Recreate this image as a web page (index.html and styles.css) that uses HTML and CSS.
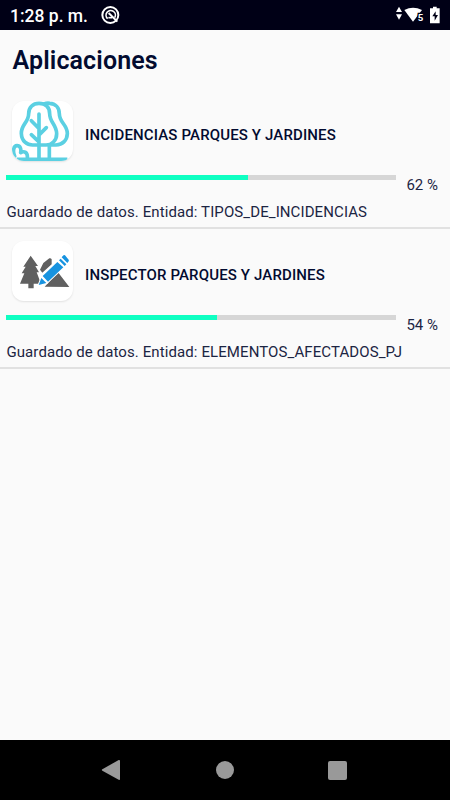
FILE: index.html
```
<!DOCTYPE html>
<html lang="es">

<head>
    <meta charset="UTF-8">
    <title>Aplicaciones</title>
    <link rel="stylesheet" href="styles.css">
</head>

<body>
    <div class="screen">
        <div class="status">
            <span class="clock">1:28 p. m.</span>
            <svg class="notif" width="20" height="20" viewBox="0 0 60 60">
                <circle cx="31" cy="30" r="24" fill="none" stroke="#fff" stroke-width="6" />
                <path d="M23 41A14 14 0 1 1 44 38" fill="none" stroke="#fff" stroke-width="5" />
                <path d="M26 24L52 50" stroke="#fff" stroke-width="6" />
                <path d="M25 38h12" stroke="#fff" stroke-width="5" />
            </svg>
            <svg class="signals" width="50" height="20" viewBox="0 0 150 60">
                <path d="M15 5l9 16H6zM6 28h18l-9 16z" fill="#fff" />
                <path d="M31 15Q57 1 84 15L57 50z" fill="#fff" />
                <text x="71" y="48" class="wifi-num">5</text>
                <path d="M117 5h11v5h9v45h-29V10h9z" fill="#fff" />
                <path d="M125 19l-10 15h7v13l10-17h-7z" fill="#000016" />
            </svg>
        </div>
        <h1 class="title">Aplicaciones</h1>
        <ul class="apps">
            <li class="app">
                <div class="head">
                    <div class="icon">
                        <svg width="60" height="60" viewBox="0 0 180 180" fill="none" stroke="#5bd0e2" stroke-width="11" stroke-linecap="round" stroke-linejoin="round">
                            <path d="M81 7C62 7 50 20 50 38C50 64 27 71 28 97C29 121 45 132 62 132H102C119 132 134 119 134 98C134 71 113 64 113 38C113 19 101 7 81 7z" />
                            <path d="M96 9C101 7 108 6 113 7C131 8 142 20 142 38C142 65 167 72 166 98C165 119 151 131 132 132H111" />
                            <path d="M81 39v132M58 59l22 23M58 101l22 21M103 80L82 101M112 134v38" />
                            <path d="M8 166C2 152 4 134 15 134C25 134 28 144 26 155C36 149 48 153 46 172" />
                            <path d="M14 175H166" stroke-linecap="butt" />
                        </svg>
                    </div>
                    <span class="name">INCIDENCIAS PARQUES Y JARDINES</span>
                </div>
                <div class="progress">
                    <div class="track">
                        <div class="bar" style="width: 62%"></div>
                    </div>
                    <span class="percent">62 %</span>
                </div>
                <p class="message">Guardado de datos. Entidad: TIPOS_DE_INCIDENCIAS</p>
            </li>
            <li class="app">
                <div class="head">
                    <div class="icon">
                        <svg width="60" height="60" viewBox="0 0 180 180">
                            <path d="M56 44L78 75H70L81 94H74L87 128H65V142H49V128H24L37 97H29L41 77H34z" fill="#606060" />
                            <path d="M84 86L94 66L112 52Q117 51 119 55V70L91 95zM98 137L138 94L172 138z" fill="#606060" />
                            <path d="M92 105L136 63L154 79L108 122zM141 58L146 53L163 70L158 75zM149 49L153 44Q156 40 159 43L170 56Q172 59 169 62L166 66zM88 111L103 126L80 132z" fill="#1793e0" stroke="#fff" stroke-width="6" paint-order="stroke" />
                        </svg>
                    </div>
                    <span class="name">INSPECTOR PARQUES Y JARDINES</span>
                </div>
                <div class="progress">
                    <div class="track">
                        <div class="bar" style="width: 54%"></div>
                    </div>
                    <span class="percent">54 %</span>
                </div>
                <p class="message">Guardado de datos. Entidad: ELEMENTOS_AFECTADOS_PJ</p>
            </li>
        </ul>
        <div class="navbar">
            <svg width="20" height="22" viewBox="0 0 60 66">
                <path d="M4 31L53 3Q57 2 57 6V60Q57 64 53 62L4 35Q1 33 4 31z" fill="#999" />
            </svg>
            <span class="home"></span>
            <span class="recent"></span>
        </div>
    </div>
</body>

</html>
```

FILE: styles.css
```
* {
    box-sizing: border-box;
}

body {
    margin: 0;
    font-family: Roboto, sans-serif;
    color: #020b30;
}

.screen {
    display: flex;
    flex-direction: column;
    width: 450px;
    height: 800px;
    background-color: #fafafa;
}

.status {
    display: flex;
    align-items: center;
    height: 30px;
    padding: 0 6px 0 10px;
    background-color: #000016;
    color: white;
}

.clock {
    width: 90px;
    padding-top: 2px;
    font-size: 17.5px;
    font-weight: 500;
    white-space: nowrap;
}

.signals {
    margin-left: auto;
}

.wifi-num {
    font-size: 29px;
    font-weight: 700;
    fill: white;
    stroke: #000016;
    stroke-width: 8px;
    paint-order: stroke;
}

.title {
    height: 59px;
    margin: 0;
    padding-left: 12.5px;
    font-size: 25px;
    font-weight: 600;
    line-height: 62px;
    letter-spacing: 0.12px;
}

.apps {
    flex: 1;
    margin: 0;
    padding: 0;
    list-style: none;
}

.app {
    height: 140px;
    padding-top: 12px;
    border-bottom: 2px solid #e1e1e1;
}

.head {
    display: flex;
    height: 60px;
    padding-left: 12px;
}

.icon {
    width: 61px;
    height: 60px;
    border-radius: 12px;
    overflow: hidden;
    background-color: white;
    box-shadow: 0 1px 2px rgba(0, 0, 0, 0.1);
}

.icon svg {
    display: block;
}

.name {
    margin-left: 12px;
    font-size: 15px;
    font-weight: 500;
    line-height: 68px;
    letter-spacing: 0.14px;
}

.progress {
    display: flex;
    height: 34px;
    padding: 14px 0 0 6.4px;
}

.track {
    width: 390px;
    height: 5px;
    background-color: #d6d6d6;
}

.bar {
    height: 5px;
    background-color: #0fffc2;
}

.percent {
    margin-left: 10px;
    color: #1c2543;
    font-size: 15px;
    line-height: 20px;
}

.message {
    margin: 0;
    padding-left: 6.4px;
    color: #1c2543;
    font-size: 15px;
    line-height: 34px;
    letter-spacing: 0.1px;
    white-space: nowrap;
}

.navbar {
    display: flex;
    align-items: center;
    justify-content: space-between;
    height: 60px;
    padding: 0 103px 0 101px;
    background-color: black;
}

.home {
    width: 18px;
    height: 18px;
    border-radius: 50%;
    background-color: #999;
}

.recent {
    width: 19px;
    height: 19px;
    border-radius: 2px;
    background-color: #999;
}
```
